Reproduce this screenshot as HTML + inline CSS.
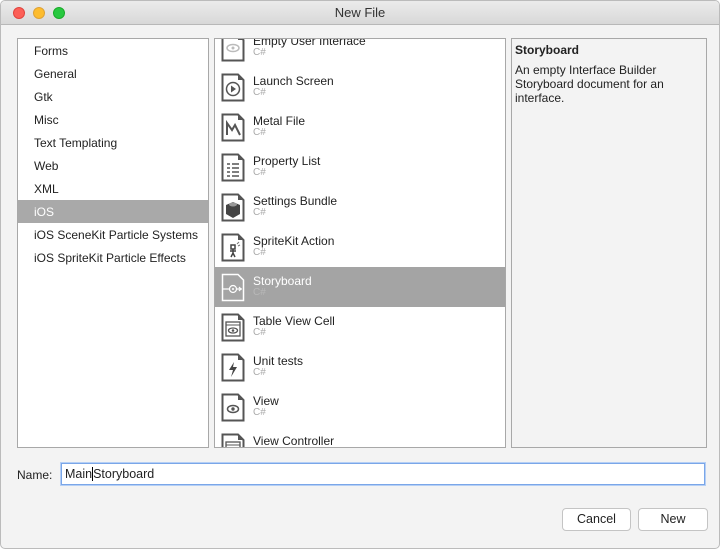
<!DOCTYPE html><html><head><style>
*{margin:0;padding:0;box-sizing:border-box}
body{width:724px;height:550px;background:#fff;font-family:"Liberation Sans",sans-serif;font-size:12px;color:#222;position:relative;overflow:hidden}
.win{position:absolute;left:0;top:0;width:720px;height:549px;background:#f3f3f3;border:1px solid #bbb;border-radius:5px;overflow:hidden}
.tb{height:24px;background:linear-gradient(#ebebeb,#d8d8d8);border-bottom:1px solid #b8b8b8;text-align:center;line-height:24px;font-size:13px;color:#333}
.dot{position:absolute;top:6px;width:12px;height:12px;border-radius:50%}
.pane{position:absolute;top:37px;height:410px;border:1px solid #a8a8a8;background:#fff;overflow:hidden}
.li{position:absolute;left:16px;font-size:12px}
.sel{position:absolute;left:0;right:0;background:#a9a9a9}
.row{position:absolute;left:0;right:0;height:40px}
.row .ic{position:absolute;left:6px;top:6px;width:24px;height:29px}
.row .t{position:absolute;left:38px;top:7px;font-size:12px;color:#222}
.row .s{position:absolute;left:38px;top:20px;font-size:10px;color:#aaa}
.row.on{background:#a4a4a4}.row.on .t{color:#fff}.row.on .s{color:#b8b8b8}
.btn{position:absolute;top:507px;height:23px;background:#fff;border:1px solid #c4c4c4;border-radius:4px;text-align:center;line-height:21px;font-size:12.5px}
</style></head><body>
<div class="win">
<div class="tb">New File</div>
<div class="dot" style="left:12px;background:#fc5f57;border:1px solid #e0443e"></div>
<div class="dot" style="left:32px;background:#fdbc2e;border:1px solid #dea236"></div>
<div class="dot" style="left:52px;background:#28c840;border:1px solid #1aab29"></div>
<div class="pane" style="left:16px;width:192px">
<div class="li" style="top:5px">Forms</div>
<div class="li" style="top:28px">General</div>
<div class="li" style="top:51px">Gtk</div>
<div class="li" style="top:74px">Misc</div>
<div class="li" style="top:97px">Text Templating</div>
<div class="li" style="top:120px">Web</div>
<div class="li" style="top:143px">XML</div>
<div class="sel" style="top:161px;height:23px"></div>
<div class="li" style="top:166px;color:#fff">iOS</div>
<div class="li" style="top:189px">iOS SceneKit Particle Systems</div>
<div class="li" style="top:212px">iOS SpriteKit Particle Effects</div>
</div>
<div class="pane" style="left:213px;width:292px">
<svg width="0" height="0" style="position:absolute"><defs><g id="doc"><path d="M1.5 1.5H17L22.5 7V27.5H1.5Z" fill="#fff" stroke="#555" stroke-width="2"/><path d="M17 1.5V7H22.5" fill="#555"/></g></defs></svg>
<div class="row" style="top:-12px"><svg class="ic"><use href="#doc"/><ellipse cx="12" cy="15" rx="6" ry="3.5" fill="none" stroke="#bbb" stroke-width="1.5"/><circle cx="12" cy="15" r="1.5" fill="#bbb"/></svg><div class="t">Empty User Interface</div><div class="s">C#</div></div>
<div class="row" style="top:28px"><svg class="ic"><use href="#doc"/><circle cx="12" cy="16" r="6.5" fill="none" stroke="#555" stroke-width="1.5"/><path d="M10 12.5L15 16L10 19.5Z" fill="#555"/></svg><div class="t">Launch Screen</div><div class="s">C#</div></div>
<div class="row" style="top:68px"><svg class="ic"><use href="#doc"/><path d="M6 22V10L11 17L14 12L19 22" fill="none" stroke="#555" stroke-width="2"/></svg><div class="t">Metal File</div><div class="s">C#</div></div>
<div class="row" style="top:108px"><svg class="ic"><use href="#doc"/><path d="M6 11h3M11 11h7M6 15h3M11 15h7M6 19h3M11 19h7M6 23h3M11 23h7" stroke="#555" stroke-width="1.5"/></svg><div class="t">Property List</div><div class="s">C#</div></div>
<div class="row" style="top:148px"><svg class="ic"><use href="#doc"/><path d="M5 12L12 9L19 12V21L12 25L5 21Z" fill="#444"/><ellipse cx="12" cy="11.5" rx="4" ry="2" fill="#999"/></svg><div class="t">Settings Bundle</div><div class="s">C#</div></div>
<div class="row" style="top:188px"><svg class="ic"><use href="#doc"/><path d="M10 12h4v4h-4zM12 16v4M9 18h6M10 24l2-4 2 4" stroke="#444" stroke-width="1.5" fill="none"/><path d="M16 11l2-2M17 13l2-1" stroke="#777"/></svg><div class="t">SpriteKit Action</div><div class="s">C#</div></div>
<div class="row on" style="top:228px"><svg class="ic"><path d="M1.5 1.5H17L22.5 7V27.5H1.5Z" fill="none" stroke="#fff" stroke-width="1.5"/><path d="M1 16h7M16 16h5M18 14l2 2-2 2" stroke="#fff" stroke-width="1.2" fill="none"/><circle cx="12" cy="16" r="3.5" fill="none" stroke="#fff" stroke-width="1.2"/><circle cx="12" cy="16" r="1" fill="#fff"/></svg><div class="t">Storyboard</div><div class="s">C#</div></div>
<div class="row" style="top:268px"><svg class="ic"><use href="#doc"/><rect x="5" y="9" width="14" height="14" fill="none" stroke="#555" stroke-width="1.3"/><path d="M5 12h14" stroke="#555"/><ellipse cx="12" cy="17.5" rx="4.5" ry="2.5" fill="none" stroke="#555" stroke-width="1.3"/><circle cx="12" cy="17.5" r="1.3" fill="#555"/></svg><div class="t">Table View Cell</div><div class="s">C#</div></div>
<div class="row" style="top:308px"><svg class="ic"><use href="#doc"/><path d="M13 9L8 17H12L10 24L16 14H12Z" fill="#444"/></svg><div class="t">Unit tests</div><div class="s">C#</div></div>
<div class="row" style="top:348px"><svg class="ic"><use href="#doc"/><ellipse cx="12" cy="16" rx="5.5" ry="3.5" fill="none" stroke="#555" stroke-width="1.5"/><circle cx="12" cy="16" r="1.7" fill="#555"/></svg><div class="t">View</div><div class="s">C#</div></div>
<div class="row" style="top:388px"><svg class="ic"><use href="#doc"/><rect x="5" y="9" width="14" height="14" fill="none" stroke="#555" stroke-width="1.3"/><path d="M5 12h14" stroke="#555"/></svg><div class="t">View Controller</div><div class="s">C#</div></div>
</div>
<div class="pane" style="left:510px;width:196px;background:#f3f3f3">
<div style="position:absolute;left:3px;top:4px;font-weight:bold;font-size:12px">Storyboard</div>
<div style="position:absolute;left:3px;top:24px;width:185px;font-size:12px;line-height:14px">An empty Interface Builder Storyboard document for an interface.</div>
</div>
<div style="position:absolute;left:16px;top:467px;font-size:12px">Name:</div>
<div style="position:absolute;left:60px;top:462px;width:644px;height:22px;background:#fff;border:1px solid #7aa6e8;box-shadow:0 0 0 1px #b5cff5;padding-left:3px;line-height:20px;font-size:12.5px">Main<span style="border-left:1px solid #000"></span>Storyboard</div>
<div class="btn" style="left:561px;width:69px">Cancel</div>
<div class="btn" style="left:637px;width:70px">New</div>
</div>
</body></html>
